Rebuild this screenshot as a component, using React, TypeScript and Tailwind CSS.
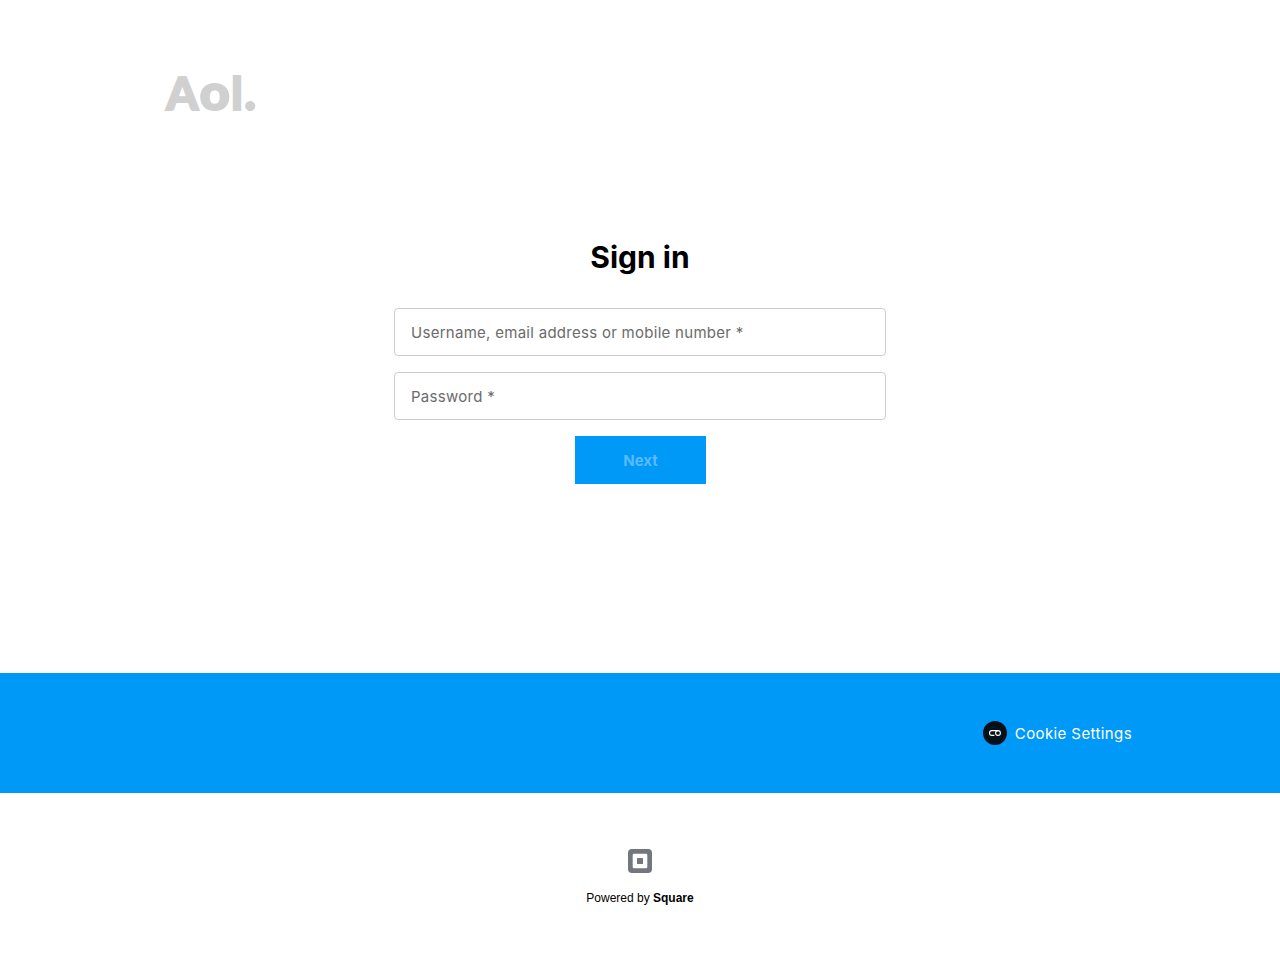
const field =
  "h-12 w-full rounded border border-[#cccccc] bg-white px-4 font-[Inter,sans-serif] text-[15px] tracking-[0.28px] outline-none placeholder:text-[#6b6b6b] placeholder:opacity-100";

function AolLogo() {
  return (
    <svg width="120" height="80" viewBox="0 -10 120 80" role="img" aria-label="Aol.">
      <g
        fill="#d0d0d0"
        stroke="#d0d0d0"
        strokeWidth="2"
        fontFamily="Lato, sans-serif"
        fontWeight="900"
        fontSize="46"
      >
        <text y="44.5" x="11.3" textLength="32" lengthAdjust="spacingAndGlyphs">A</text>
        <text y="45.3" x="44.7" fontSize="48.5" textLength="30" lengthAdjust="spacingAndGlyphs">o</text>
        <text y="44.5" x="76.3" fontSize="45">l</text>
        <text y="45.2" x="89.2" fontSize="50">.</text>
      </g>
    </svg>
  );
}

function CookieIcon() {
  return (
    <svg width="24" height="24" viewBox="0 0 24 24" fill="none">
      <circle cx="12" cy="12" r="12" fill="#05101a" />
      <path
        d="M15 9.6H8.9a2.4 2.4 0 0 0 0 4.8H11.4"
        stroke="white"
        strokeWidth="1.1"
      />
      <circle cx="15" cy="12" r="2.4" stroke="white" strokeWidth="1.1" />
    </svg>
  );
}

function SquareIcon() {
  return (
    <svg width="24" height="24" viewBox="0 0 24 24">
      <rect width="24" height="24" rx="4" fill="#72777d" />
      <rect x="4.7" y="4.7" width="14.6" height="14.6" rx="1.2" fill="white" />
      <rect x="9" y="9" width="6" height="6" rx="0.5" fill="#72777d" />
    </svg>
  );
}

export default function App() {
  return (
    <div className="flex h-[960px] w-full flex-col bg-white font-[Inter,sans-serif] text-black">
      <header className="flex h-[186px] shrink-0 items-start pt-[55px] pl-[155px]">
        <AolLogo />
      </header>
      <main className="flex h-[487px] shrink-0 flex-col items-center pt-[49px]">
        <h1 className="h-[73px] text-[30px] leading-[44px] font-bold">Sign in</h1>
        <form className="flex w-[492px] flex-col items-center gap-4">
          <input className={field} placeholder="Username, email address or mobile number *" />
          <input className={field} type="password" placeholder="Password *" />
          <button
            type="button"
            className="ml-px h-12 w-[131px] bg-[#0099f7] pt-0.5 text-[15px] font-bold text-[#59bbfa]"
          >
            Next
          </button>
        </form>
      </main>
      <section className="flex h-[120px] shrink-0 items-center justify-end bg-[#0099f7] pr-[148px]">
        <button type="button" className="flex items-center gap-2 text-[15px] leading-6 text-white">
          <CookieIcon />
          <span className="pt-px tracking-[0.4px]">Cookie Settings</span>
        </button>
      </section>
      <footer className="flex flex-1 flex-col items-center pt-14">
        <SquareIcon />
        <p className="mt-4 font-['Liberation_Sans',sans-serif] text-[12px] leading-[18px]">
          Powered by <strong>Square</strong>
        </p>
      </footer>
    </div>
  );
}
